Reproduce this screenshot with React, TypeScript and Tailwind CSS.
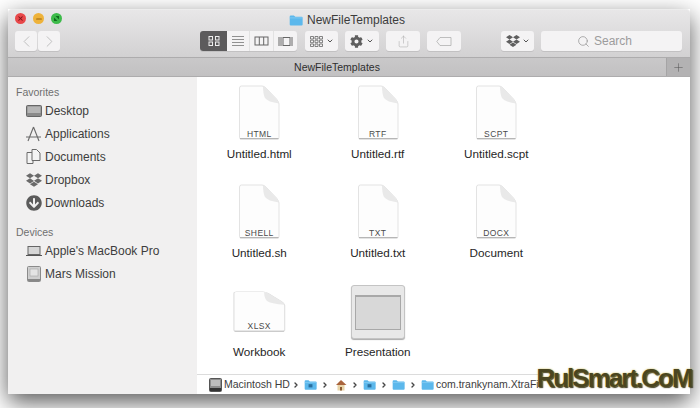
import { ChevronDown, ChevronLeft, ChevronRight, Minus, Plus, Search, Share, X } from 'lucide-react';
import { FaDropbox, FaCog, FaArrowCircleDown } from 'react-icons/fa';

const font = "font-['Liberation_Sans',Arial,sans-serif]";

function Folder({ w = 13, mark = false }: { w?: number; mark?: boolean }) {
    return (
        <svg width={w} height={Math.round(w * 0.85)} viewBox="0 0 20 17" className="shrink-0">
            <path d="M1 3.5 Q1 2 2.5 2 H7 L9 4 H18 Q19.5 4 19.5 5.5 V15 Q19.5 16.5 18 16.5 H2.5 Q1 16.5 1 15 Z" fill="#5cb8ec" />
            <path d="M1 5.5 H19.5" stroke="#8fd0f4" strokeWidth="1" />
            {mark && <rect x="7" y="8" width="6" height="5" fill="#2a6f9e" />}
        </svg>
    );
}

function Page({ ext, w = 42, h = 55 }: { ext: string; w?: number; h?: number }) {
    return (
        <div className="relative" style={{ width: w, height: h }}>
            <svg width={w} height={h} viewBox="0 0 42 55" preserveAspectRatio="none" className="block">
                <path d="M1.500 3 Q1.500 1 3.500 1 H24 Q26 1 28 3 L38.500 14 Q41 17 41 19 V52.500 Q41 54 39.500 54 H3 Q1.500 54 1.500 52.500 Z" fill="#fdfdfd" stroke="#dcdcdc" strokeWidth="0.8" />
                <path d="M25 1.500 Q25 9 27 13 Q30 17 41 18.500 Q40 16 38 13.500 L28 3 Q26.500 1.500 25 1.500 Z" fill="#e9e9e9" />
                <path d="M2 53.700 H40.500" stroke="#a9a9a9" strokeWidth="1" />
            </svg>
            <span className={`${font} absolute bottom-[1px] left-0 right-0 text-center text-[8.5px] leading-[10px] tracking-[0.4px] text-[#4a4a4a]`}>
                {ext}
            </span>
        </div>
    );
}

function FileItem({ label, icon }: { label: string; icon: React.ReactNode }) {
    return (
        <div className="flex h-[99px] flex-col items-center">
            <div className="flex h-[56px] items-end justify-center">{icon}</div>
            <span className="mt-[7px] text-[11.7px] leading-[14px] text-[#262626]">{label}</span>
        </div>
    );
}

function SideRow({ icon, label }: { icon: React.ReactNode; label: string }) {
    return (
        <div className="flex h-[23px] items-center pl-[14px] text-[12px] text-[#3d3d3d]">
            <span className="flex w-[23px] shrink-0 items-center justify-center text-[#6a6a6a]">{icon}</span>
            <span>{label}</span>
        </div>
    );
}

function ToolBtn({ className, children }: { className?: string; children: React.ReactNode }) {
    return (
        <div className={`flex h-[20px] items-center justify-center rounded-[3px] bg-[#f4f3f4] shadow-[0_1px_0_#c2c1c2] ${className ?? ''}`}>
            {children}
        </div>
    );
}

function Sep() {
    return <ChevronRight size={8} strokeWidth={4} className="mx-[4px] shrink-0 text-[#444]" />;
}

export default function App() {
    return (
        <div className={`${font} h-[408px] w-[700px] overflow-hidden bg-white pl-[8px] pt-[9px]`}>
            <div className="relative flex h-[385px] w-[682px] flex-col shadow-[0_8px_22px_rgba(0,0,0,0.65)]">
                {/* title + toolbar */}
                <div className="h-[48px] shrink-0 rounded-t-[4px] border-t border-[#ececec] bg-gradient-to-b from-[#e8e7e8] to-[#d2d1d2]">
                    <div className="relative flex h-[20px] items-center justify-center gap-[4px] pr-[4px] text-[12px] text-[#3c3c3c]">
                        <div className="absolute left-[7px] top-[3px] flex gap-[7px]">
                            <span className="flex h-[11px] w-[11px] items-center justify-center rounded-full bg-[#e8484a]"><X size={7} strokeWidth={3.5} className="text-[#7a1418]" /></span>
                            <span className="flex h-[11px] w-[11px] items-center justify-center rounded-full bg-[#eeb23a]"><Minus size={8} strokeWidth={3.5} className="text-[#94620f]" /></span>
                            <span className="flex h-[11px] w-[11px] items-center justify-center rounded-full bg-[#3dbb4a]">
                                <svg width="7" height="7" viewBox="0 0 7 7" fill="#0f6a1c"><path d="M1 6V2.500L4.500 6Z" /><path d="M6 1V4.500L2.500 1Z" /></svg>
                            </span>
                        </div>
                        <Folder w={14} />
                        <span>NewFileTemplates</span>
                    </div>
                    <div className="flex h-[22px] items-center pl-[7px]">
                        <ToolBtn className="w-[22px]"><ChevronLeft size={19} strokeWidth={1.2} className="text-[#bdbdbd]" /></ToolBtn>
                        <ToolBtn className="ml-px w-[22px]"><ChevronRight size={19} strokeWidth={1.2} className="text-[#bdbdbd]" /></ToolBtn>
                        <div className="ml-[140px] flex h-[20px] w-[97px] overflow-hidden rounded-[3px] bg-[#f4f3f4] shadow-[0_1px_0_#c2c1c2]">
                            <div className="flex w-[27px] items-center justify-center bg-[#5c5b5c]">
                                <svg width="12" height="10" viewBox="0 0 12 10" fill="none" stroke="#eee" strokeWidth="1"><rect x="1" y="0.5" width="3.5" height="3.5" /><rect x="7.5" y="0.5" width="3.5" height="3.5" /><rect x="1" y="6" width="3.5" height="3.5" /><rect x="7.5" y="6" width="3.5" height="3.5" /></svg>
                            </div>
                            <div className="flex w-[23px] items-center justify-center border-r border-[#e2e2e2]">
                                <svg width="14" height="10" viewBox="0 0 14 10" stroke="#777" strokeWidth="0.8"><path d="M1 .5H13M1 3.5H13M1 6.5H13M1 9.5H13" /></svg>
                            </div>
                            <div className="flex w-[24px] items-center justify-center border-r border-[#e2e2e2]">
                                <svg width="15" height="10" viewBox="0 0 15 10" fill="none" stroke="#666" strokeWidth="1"><rect x="1" y="1" width="13" height="8" /><path d="M5.3 1V9M9.7 1V9" /></svg>
                            </div>
                            <div className="flex flex-1 items-center justify-center">
                                <svg width="16" height="11" viewBox="0 0 16 11" fill="none" stroke="#666" strokeWidth="1"><rect x="5" y="1.5" width="7" height="8" /><path d="M1 1V10M3 1V10M14 1V10" /></svg>
                            </div>
                        </div>
                        <ToolBtn className="ml-[8px] w-[33px] gap-[3px]">
                            <svg width="13" height="11" viewBox="0 0 13 11" fill="none" stroke="#666" strokeWidth="0.8"><path d="M.5.5H3.5V3H.5ZM5 .5H8V3H5ZM9.500.5H12.500V3H9.500ZM.5 4.200H3.500V6.700H.5ZM5 4.200H8V6.700H5ZM9.500 4.200H12.500V6.700H9.500ZM.5 8H3.500V10.500H.5ZM5 8H8V10.500H5ZM9.500 8H12.500V10.500H9.500Z" /></svg>
                            <ChevronDown size={8} strokeWidth={3} className="text-[#555]" />
                        </ToolBtn>
                        <ToolBtn className="ml-[7px] w-[34px] gap-[3px]">
                            <FaCog size={13} className="text-[#5e5e5e]" />
                            <ChevronDown size={8} strokeWidth={3} className="text-[#555]" />
                        </ToolBtn>
                        <ToolBtn className="ml-[7px] w-[34px] bg-[#ecebec]"><Share size={13} strokeWidth={1} className="text-[#a9a9a9]" /></ToolBtn>
                        <ToolBtn className="ml-[7px] w-[34px] bg-[#ecebec]">
                            <svg width="16" height="9" viewBox="0 0 16 9" fill="none" stroke="#b0b0b0" strokeWidth="0.8"><path d="M4 .5H15V8.500H4L.8 4.500Z" /></svg>
                        </ToolBtn>
                        <ToolBtn className="ml-[40px] w-[33px] gap-[2px]">
                            <FaDropbox size={14} className="text-[#5e5e5e]" />
                            <ChevronDown size={8} strokeWidth={3} className="text-[#555]" />
                        </ToolBtn>
                        <ToolBtn className="ml-[7px] w-[141px] gap-[4px] pr-[14px] text-[12px] text-[#9c9c9c]">
                            <Search size={13} strokeWidth={1.3} className="text-[#8e8e8e]" />
                            <span>Search</span>
                        </ToolBtn>
                    </div>
                </div>
                {/* tab bar */}
                <div className="flex h-[20px] shrink-0 border-y border-[#adacad] bg-gradient-to-b from-[#c9c8c9] to-[#c2c1c2]">
                    <div className="flex-1 text-center text-[10.5px] leading-[18px] text-[#2e2e2e]">NewFileTemplates</div>
                    <div className="flex w-[24px] items-center justify-center border-l border-[#a5a4a5] bg-[#b3b2b3]">
                        <Plus size={13} strokeWidth={1} className="text-[#555]" />
                    </div>
                </div>
                {/* body */}
                <div className="flex min-h-0 flex-1">
                    <aside className="w-[189px] shrink-0 bg-[#f1f0f0] pt-[8px]">
                        <div className="pl-[8px] text-[10.5px] leading-[14px] text-[#6f6f6f]">Favorites</div>
                        <SideRow label="Desktop" icon={
                            <svg width="16" height="12" viewBox="0 0 16 12"><rect x="0.5" y="0.500" width="15" height="11" rx="1" fill="#8a8a8a" stroke="#666" /><rect x="1.500" y="1.500" width="13" height="6.500" fill="#b5b5b5" /></svg>
                        } />
                        <SideRow label="Applications" icon={
                            <svg width="17" height="16" viewBox="0 0 17 16" fill="none" stroke="#6a6a6a" strokeWidth="1.100"><path d="M8.500 1 L3 15 M8.500 1 L14 15 M1 11 H16" /></svg>
                        } />
                        <SideRow label="Documents" icon={
                            <svg width="15" height="15" viewBox="0 0 15 15" fill="#f4f4f4" stroke="#6a6a6a" strokeWidth="1"><path d="M1 3.500H7V14.500H1Z" /><path d="M6 .5H10.500L14 4V11.500H6Z" /></svg>
                        } />
                        <SideRow label="Dropbox" icon={<FaDropbox size={16} />} />
                        <SideRow label="Downloads" icon={<FaArrowCircleDown size={16} className="text-[#5b5b5b]" />} />
                        <div className="mt-[11px] pl-[8px] text-[10.5px] leading-[14px] text-[#6f6f6f]">Devices</div>
                        <SideRow label="Apple's MacBook Pro" icon={
                            <svg width="16" height="10" viewBox="0 0 16 10"><rect x="2" y="0.500" width="12" height="8" fill="#d6d6d6" stroke="#666" /><path d="M0 9.500H16" stroke="#555" /></svg>
                        } />
                        <SideRow label="Mars Mission" icon={
                            <svg width="14" height="16" viewBox="0 0 14 16"><rect x="0.500" y="0.500" width="13" height="15" rx="1" fill="#cfcfcf" stroke="#8a8a8a" /><rect x="3" y="3" width="8" height="7" fill="#e4e4e4" stroke="#a5a5a5" strokeWidth="0.6" /><rect x="1" y="13" width="12" height="2" fill="#888" /></svg>
                        } />
                    </aside>
                    <main className="flex min-w-0 flex-1 flex-col bg-white">
                        <div className="grid min-h-0 flex-1 grid-cols-[118.5px_118.5px_118.5px] content-start overflow-hidden pl-[3px] pt-[7px]">
                            <FileItem label="Untitled.html" icon={<Page ext="HTML" />} />
                            <FileItem label="Untitled.rtf" icon={<Page ext="RTF" />} />
                            <FileItem label="Untitled.scpt" icon={<Page ext="SCPT" />} />
                            <FileItem label="Untitled.sh" icon={<Page ext="SHELL" />} />
                            <FileItem label="Untitled.txt" icon={<Page ext="TXT" />} />
                            <FileItem label="Document" icon={<Page ext="DOCX" />} />
                            <FileItem label="Workbook" icon={<div className="pb-[6px]"><Page ext="XLSX" w={54} h={41} /></div>} />
                            <FileItem label="Presentation" icon={
                                <div className="mb-[-1px] flex h-[54px] w-[54px] items-center justify-center rounded-[3px] border border-[#c4c4c4] bg-[#e8e8e8] shadow-[0_1px_1px_#aaa]">
                                    <div className="h-[35px] w-[46px] border border-t-2 border-[#a8a8a8] bg-[#d8d8d8]" />
                                </div>
                            } />
                        </div>
                        <div className="flex h-[20px] shrink-0 items-center overflow-hidden whitespace-nowrap border-t border-[#dcdcdc] bg-white pl-[12px] text-[10.5px] text-[#3d3d3d]">
                            <svg width="13" height="14" viewBox="0 0 13 14" className="mr-[2px] shrink-0"><rect x="0.500" y="0.500" width="12" height="13" rx="1" fill="#8e8e8e" stroke="#555" /><rect x="2" y="2" width="9" height="6" fill="#bdbdbd" /><rect x="1" y="10" width="11" height="3" fill="#333" /></svg>
                            <span className="mr-[-2px]">Macintosh HD</span>
                            <Sep />
                            <Folder w={13} mark />
                            <Sep />
                            <span className="ml-[2px]" />
                            <svg width="12" height="12" viewBox="0 0 12 12" className="shrink-0"><path d="M6 1 L11.500 6 H1 L6 1Z" fill="#a9643c" /><rect x="2.500" y="6" width="7" height="5.500" fill="#e8d4a8" /><rect x="5" y="8" width="2" height="3.500" fill="#8a5a30" /></svg>
                            <Sep />
                            <Folder w={13} mark />
                            <Sep />
                            <Folder w={13} />
                            <Sep />
                            <Folder w={13} />
                            <span className="ml-[2px]">com.trankynam.XtraFi</span>
                        </div>
                    </main>
                </div>
                {/* site watermark */}
                <div className="absolute bottom-0 right-0 flex h-[24px] w-[152px] items-end justify-center overflow-visible bg-white pb-[1px] text-[26px] font-bold leading-[30px] tracking-[-2px] whitespace-nowrap text-[#4a4520] [text-shadow:0_0_2px_#c8b84a,1px_1px_1px_#222]">
                    RulSmart.CoM
                </div>
            </div>
        </div>
    );
}
